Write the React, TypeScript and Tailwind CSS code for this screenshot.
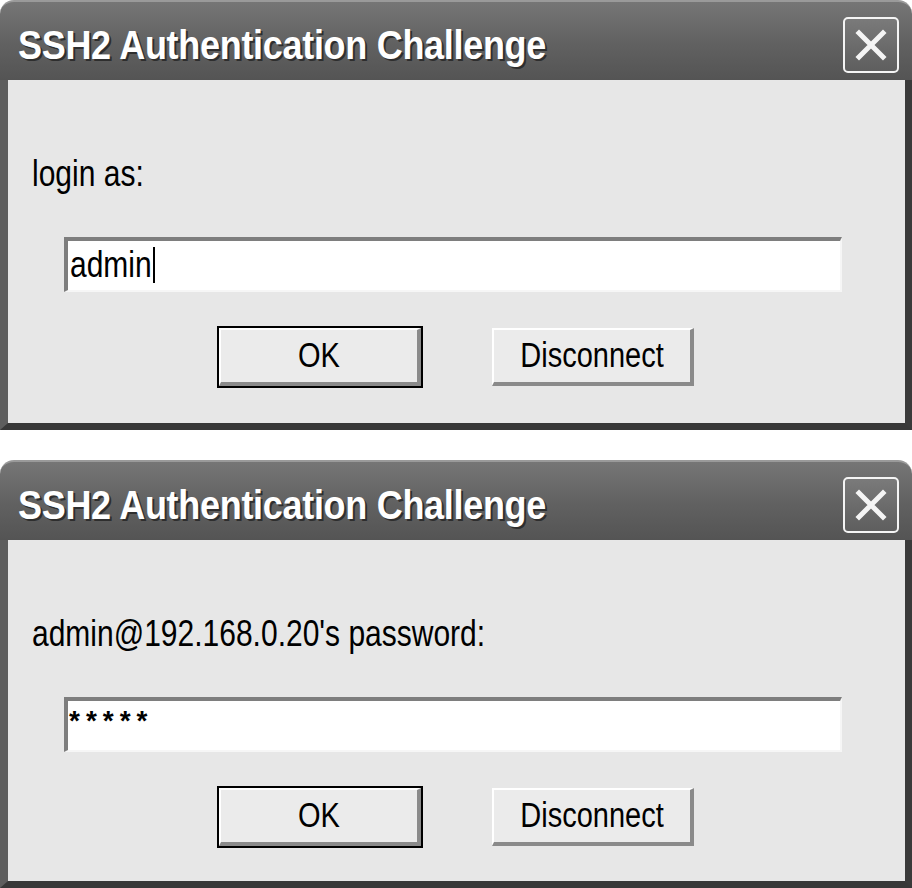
import React from "react";

const ui = { fontFamily: '"Liberation Sans", Arial, sans-serif' };

function CloseButton() {
  return (
    <div className="mt-[15px] mr-[13px] flex h-[56px] w-[56px] items-center justify-center rounded-[5px] border-2 border-[#f4f4f4] bg-gradient-to-b from-[#7a7a7a] to-[#5e5e5e]">
      <svg width="34" height="34" viewBox="0 0 34 34">
        <path d="M5 5 L29 29 M29 5 L5 29" stroke="#f4f4f4" strokeWidth="5" strokeLinecap="square" />
      </svg>
    </div>
  );
}

function Button({ label, primary }: { label: string; primary?: boolean }) {
  return (
    <div className={primary ? "border-2 border-black" : "border-0 p-[2px]"}>
      <div className="flex h-[58px] w-[202px] items-center justify-center border-t-2 border-l-2 border-b-[4px] border-r-[4px] border-t-white border-l-white border-b-[#8a8a8a] border-r-[#8a8a8a] bg-[#ebebeb] text-[29px] text-black">
        <span className="inline-block scale-y-[1.2]">{label}</span>
      </div>
    </div>
  );
}

function Dialog({ prompt, value, password }: { prompt: string; value: string; password?: boolean }) {
  return (
    <div className="flex w-[912px] flex-col" style={ui}>
      <div className="flex h-[80px] items-start justify-between rounded-t-[14px] border-t-2 border-t-[#9a9a9a] bg-gradient-to-b from-[#767676] via-[#626262] to-[#545454]">
        <div className="pl-[18px] pt-[21px] text-[36px] font-bold leading-[44px] tracking-[-0.3px] text-white [text-shadow:2px_2px_0_#2e2e2e]">
          <span className="inline-block scale-y-[1.15]">SSH2 Authentication Challenge</span>
        </div>
        <CloseButton />
      </div>
      <div className="flex flex-1 flex-col border-l-[8px] border-r-[7px] border-b-[7px] border-l-[#5e5e5e] border-r-[#3a3a3a] border-b-[#383838] bg-[#e7e7e7]">
        <div className="pl-[24px] pt-[74px] text-[30px] leading-[40px] text-black">
          <span className="inline-block scale-y-[1.2]">{prompt}</span>
        </div>
        <div className="ml-[56px] mt-[43px] flex h-[55px] w-[778px] items-start border-t-[4px] border-l-[4px] border-b-2 border-r-2 border-t-[#7e7e7e] border-l-[#7e7e7e] border-b-[#f6f6f6] border-r-[#f6f6f6] bg-white">
          {password ? (
            <span className="pl-[1px] pt-[3px] text-[28px] leading-[34px] font-bold tracking-[6px] text-black">{value}</span>
          ) : (
            <span className="flex items-center pl-[2px] pt-[4px] text-[30px] leading-[40px] text-black">
              <span className="inline-block scale-y-[1.2]">{value}</span>
              <span className="ml-[1px] inline-block h-[36px] w-[2px] bg-black" />
            </span>
          )}
        </div>
        <div className="mt-[34px] flex justify-center gap-[67px]">
          <Button label="OK" primary />
          <Button label="Disconnect" />
        </div>
      </div>
    </div>
  );
}

export default function App() {
  return (
    <div className="flex h-[888px] w-[912px] flex-col bg-white">
      <div className="flex h-[430px]">
        <Dialog prompt="login as:" value="admin" />
      </div>
      <div className="mt-[30px] flex h-[428px]">
        <Dialog prompt="admin@192.168.0.20's password:" value="*****" password />
      </div>
    </div>
  );
}
